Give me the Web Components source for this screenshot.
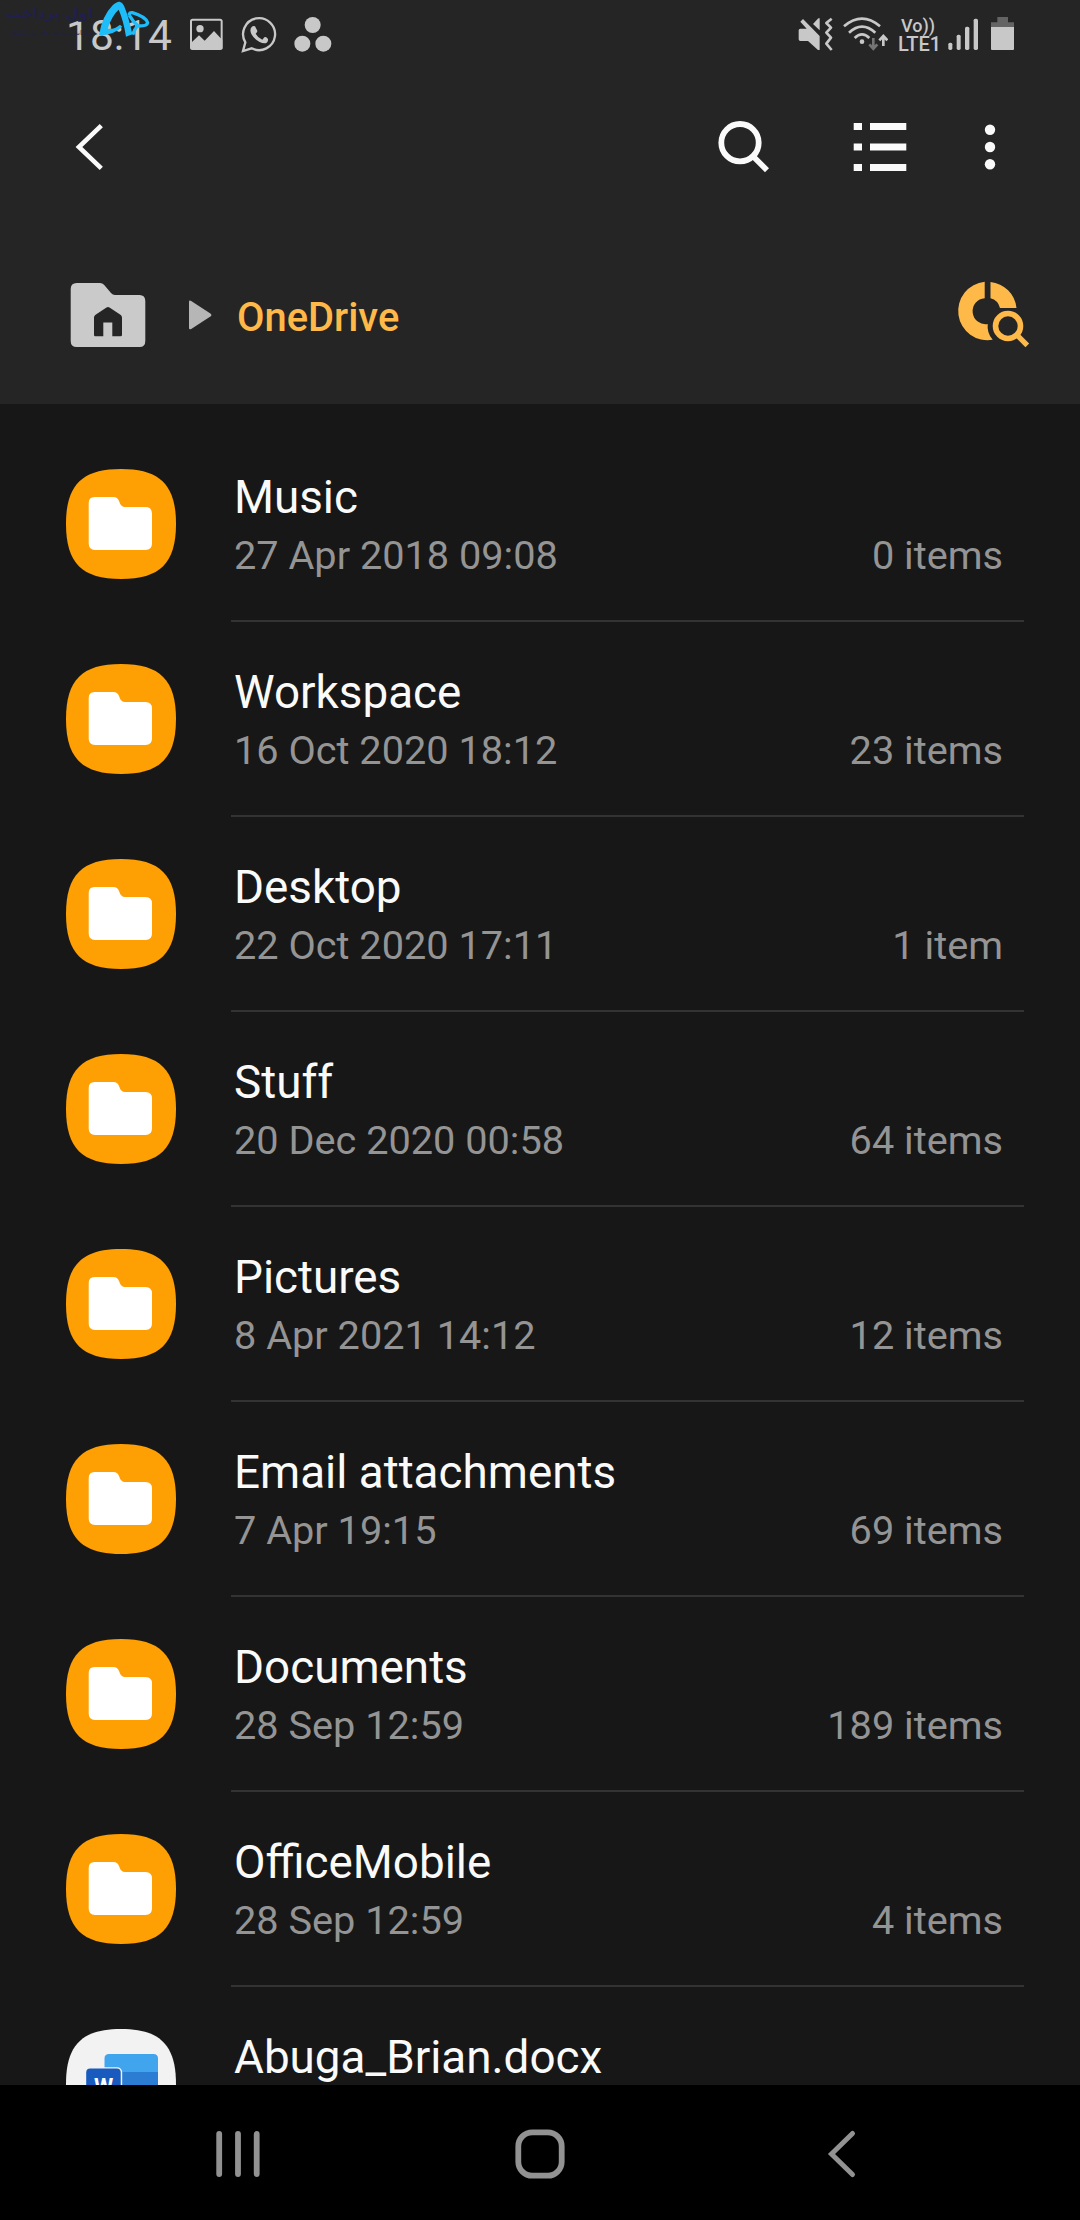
<!DOCTYPE html>
<html lang="en">
<head>
<meta charset="utf-8">
<title>My Files</title>
<style>
  html, body {
    margin: 0;
    height: 100%;
    background: #171717;
  }

  body {
    font-family: Roboto, "Noto Sans", sans-serif;
    color: #fafafa;
    overflow: hidden;
  }
</style>
</head>
<body>
<files-app>
  <status-bar slot="header" time="18:14"></status-bar>
  <tool-bar slot="header"></tool-bar>
  <path-bar slot="header">OneDrive</path-bar>
  <file-row count="0 items">Music<span slot="date">27 Apr 2018 09:08</span></file-row>
  <file-row count="23 items">Workspace<span slot="date">16 Oct 2020 18:12</span></file-row>
  <file-row count="1 item">Desktop<span slot="date">22 Oct 2020 17:11</span></file-row>
  <file-row count="64 items">Stuff<span slot="date">20 Dec 2020 00:58</span></file-row>
  <file-row count="12 items">Pictures<span slot="date">8 Apr 2021 14:12</span></file-row>
  <file-row count="69 items">Email attachments<span slot="date">7 Apr 19:15</span></file-row>
  <file-row count="189 items">Documents<span slot="date">28 Sep 12:59</span></file-row>
  <file-row count="4 items">OfficeMobile<span slot="date">28 Sep 12:59</span></file-row>
  <file-row type="word">Abuga_Brian.docx</file-row>
  <nav-keys slot="footer"></nav-keys>
</files-app>

<script>
const define = (name, html, setup) => {
  const template = document.createElement('template');
  template.innerHTML = html;
  customElements.define(name, class extends HTMLElement {
    constructor() {
      super();
      this.attachShadow({ mode: 'open' }).appendChild(template.content.cloneNode(true));
    }

    connectedCallback() {
      if (setup) {
        setup(this, this.shadowRoot);
      }
    }
  });
};

define('files-app', `
  <style>
    :host {
      display: flex;
      flex-direction: column;
      position: relative;
      width: 1080px;
      height: 2220px;
      overflow: hidden;
      background: #171717;
    }

    header {
      flex: none;
      height: 404px;
      background: #252525;
    }

    main {
      flex: 1;
      min-height: 0;
      overflow: hidden;
      padding-top: 23px;
    }

    brand-mark {
      position: absolute;
      top: 0;
      left: 0;
    }
  </style>
  <header><slot name="header"></slot></header>
  <main><slot></slot></main>
  <slot name="footer"></slot>
  <brand-mark></brand-mark>
`);

define('brand-mark', `
  <style>
    :host {
      display: block;
      width: 152px;
      height: 40px;
      font-family: "DejaVu Sans", sans-serif;
      color: #211f4c;
    }

    .text {
      width: 91px;
      padding-left: 2px;
      direction: rtl;
      white-space: nowrap;
    }

    .name {
      font-size: 15px;
      font-weight: 700;
      line-height: 26px;
      height: 29px;
    }

    .sub {
      font-size: 6.6px;
      line-height: 9px;
      color: #232140;
    }

    svg {
      position: absolute;
      left: 97px;
      top: 0;
    }
  </style>
  <div class="text">
    <div class="name">اول پرداخت</div>
    <div class="sub">سامانه پرداخت های بین المللی</div>
  </div>
  <svg width="55" height="40" viewBox="291 0 165 120" fill="none" stroke="#1fbcfa">
    <path fill="#1fbcfa" stroke="none" d="M297 106Q306 48 338 16Q350 4 359 5Q367 7 372 17Q386 50 397 103L378 110Q370 60 356 29Q336 46 323 86Q342 89 360 74L367 80Q345 104 297 106Z"/>
    <path stroke-width="10" d="M387 47Q388 36 397 38Q437 50 443 68Q442 79 412 78Q404 87 398 104M388 46Q400 66 412 76"/>
  </svg>
`);

// Status icons are drawn on a 3x grid, 210 units being the 70px bar
define('status-bar', `
  <style>
    :host {
      display: flex;
      align-items: flex-start;
      height: 70px;
      color: #c8c8c8;
    }

    svg {
      flex: none;
      height: 70px;
      fill: currentColor;
    }

    .time {
      width: 124px;
      padding-left: 66px;
      font-size: 42.5px;
      line-height: 50px;
      padding-top: 11px;
    }

    .left, .right {
      display: flex;
    }

    .left { gap: 16px; }
    .right { margin-left: auto; padding-right: 65px; gap: 9px; }

    .lte {
      width: 42px;
      padding: 17px 0 0 1px;
      box-sizing: border-box;
      font-weight: 500;
      white-space: nowrap;
    }

    .lte div { line-height: 18px; height: 18px; }
    .vo { font-size: 18px; padding-left: 3px; }
    .net { font-size: 20px; }
  </style>
  <div class="time"></div>
  <div class="left">
    <svg width="35" viewBox="570 0 105 210">
      <rect x="573" y="59" width="92" height="88" rx="5" fill="none" stroke="currentColor" stroke-width="6"/>
      <circle cx="600" cy="86" r="11"/>
      <path d="M572 130L597 106L614 122L642 93L667 120V148H572Z"/>
    </svg>
    <svg width="37" viewBox="723 0 111 210">
      <path fill="none" stroke="currentColor" stroke-width="7" d="M729 153L736 127A48 48 0 1 1 755 145Z"/>
      <path d="M755 81Q760 76 765 79L772 92Q773 96 767 101Q774 114 787 119L793 112Q796 110 799 112L804 117Q805 124 800 128Q792 132 779 126Q762 117 754 102Q748 89 755 81Z"/>
    </svg>
    <svg width="38" viewBox="880 0 114 210">
      <circle cx="936" cy="75" r="24"/>
      <circle cx="905" cy="131" r="24"/>
      <circle cx="968" cy="131" r="24"/>
    </svg>
  </div>
  <div class="right">
    <svg width="36" viewBox="48 0 108 210">
      <path d="M50 91Q50 86 55 86H74L55 65L63 57L113 108V150H108L78 123H55Q50 123 50 118Z"/>
      <path d="M93 72L109 55H113V91Z"/>
      <path fill="none" stroke="currentColor" stroke-width="8" stroke-linejoin="round" d="M149 56L133 69L147 83L133 98L147 113L133 131L149 150"/>
    </svg>
    <svg width="45" viewBox="189 0 135 210">
      <g fill="none" stroke="currentColor" stroke-width="8">
        <path d="M192 79Q246 33 300 79"/>
        <path d="M207 98Q246 62 286 98"/>
        <path d="M224 114Q246 92 268 114"/>
        <path stroke="#757575" d="M280 114V144M268 133L280 146L292 133"/>
        <path d="M310 138V110M298 121L310 108L322 121"/>
      </g>
      <circle cx="246" cy="125" r="7"/>
    </svg>
    <div class="lte">
      <div class="vo">Vo))</div>
      <div class="net">LTE1</div>
    </div>
    <svg width="31" viewBox="501 0 93 210">
      <rect x="502" y="128" width="12" height="22" rx="5"/>
      <rect x="527" y="104" width="12" height="46" rx="5"/>
      <rect x="552" y="80" width="13" height="70" rx="5"/>
      <rect x="578" y="56" width="13" height="94" rx="5"/>
    </svg>
    <svg width="27" viewBox="624 0 81 210">
      <path fill="#646464" d="M633 67H652V52Q652 51 653 51H683Q684 51 684 52V67H702V81H633Z"/>
      <path d="M633 81H702V147Q702 150 699 150H636Q633 150 633 147Z"/>
    </svg>
  </div>
`, (host, root) => {
  root.querySelector('.time').textContent = host.getAttribute('time');
});

define('tool-bar', `
  <style>
    :host {
      display: flex;
      align-items: center;
      height: 154px;
      padding: 0 84px 0 68px;
      color: #fafafa;
    }

    .actions {
      display: flex;
      gap: 79px;
      margin-left: auto;
    }

    .more { margin-left: -3px; }

    svg { display: block; fill: currentColor; overflow: visible; }
    .line { fill: none; stroke: currentColor; }
  </style>
  <svg width="44" height="50" viewBox="68 122 44 50">
    <path class="line" stroke-width="4.6" d="M101.3 125.6L78.9 147L101.3 168.4"/>
  </svg>
  <div class="actions">
    <svg width="56" height="50" viewBox="717 122 56 50">
      <circle class="line" stroke-width="5.8" cx="740" cy="142.7" r="18.7"/>
      <path class="line" stroke-width="5.6" d="M753 156.2L767 170.2"/>
    </svg>
    <svg width="56" height="50" viewBox="852 122 56 50">
      <path d="M853.7 123h8.3v7h-8.3zM870 123h36.3v7H870zM853.7 143.5h8.3v7h-8.3zM870 143.5h36.3v7H870zM853.7 164h8.3v7h-8.3zM870 164h36.3v7H870z"/>
    </svg>
    <svg class="more" width="12" height="50" viewBox="984 122 12 50">
      <circle cx="990" cy="129.8" r="5.2"/>
      <circle cx="990" cy="147" r="5.2"/>
      <circle cx="990" cy="164.2" r="5.2"/>
    </svg>
  </div>
`);

define('path-bar', `
  <style>
    :host {
      display: flex;
      align-items: center;
      height: 180px;
      padding: 0 50px 0 68px;
      color: #feb948;
      font-size: 39.9px;
      font-weight: 500;
    }

    svg { display: block; flex: none; }
    .home { margin-right: 36px; }
    .arrow { margin-right: 19px; }
    .usage { margin-left: auto; }
    .name { padding-top: 6px; }
  </style>
  <svg class="home" width="80" height="70" viewBox="68 279 80 70" fill="#cacaca">
    <path fill-rule="evenodd" d="M76.7 283H100Q102.5 283 104 284.7L111 293Q112.7 295 115 295H139.5Q145.3 295 145.3 301V341Q145.3 347 139.5 347H76.7Q70.7 347 70.7 341V289Q70.7 283 76.7 283ZM94 317.5V335Q94 336.3 95.3 336.3H103.3V322.5H112.3V336.3H120.5Q122 336.3 122 335V317.5Q122 316 120.8 315L109.5 307.4Q108 306.4 106.5 307.4L95.2 315Q94 316 94 317.5Z"/>
  </svg>
  <svg class="arrow" width="34" height="70" viewBox="184 279 34 70" fill="#b6b6b6">
    <path d="M189 302Q189 299.8 191.2 301.1L210.4 313.4Q212.3 315 210.4 316.6L191.2 329Q189 330 189 328Z"/>
  </svg>
  <span class="name"><slot></slot></span>
  <svg class="usage" width="76" height="70" viewBox="954 279 76 70" fill="#feb948">
    <path d="M984.7 281.8A29.3 29.3 0 1 0 992.7 339.8A20.5 20.5 0 0 1 987.7 324A13 13 0 1 1 984.7 298.2Z"/>
    <path d="M990.5 281.9A29.3 29.3 0 0 1 1016.5 308H1000A13.3 13.3 0 0 0 990.5 298.3Z"/>
    <circle cx="1008" cy="326" r="12.5" fill="none" stroke="#feb948" stroke-width="5.6"/>
    <path fill="none" stroke="#feb948" stroke-width="5.2" d="M1016.5 334.5L1027.3 345.3"/>
  </svg>
`);

define('file-row', `
  <style>
    :host {
      display: grid;
      grid-template-columns: 165px 793px;
      height: 195px;
      padding-left: 66px;
    }

    .icon {
      padding-top: 42px;
    }

    svg { display: block; }

    .body {
      box-sizing: border-box;
      height: 195px;
      padding: 44px 21px 0 3px;
      border-bottom: 2px solid #333;
    }

    .name {
      font-size: 45.8px;
      line-height: 54px;
      white-space: nowrap;
    }

    .meta {
      display: flex;
      justify-content: space-between;
      margin-top: 8px;
      font-size: 39.7px;
      line-height: 46px;
      color: #949494;
    }

    .word { display: none; }
    :host([type="word"]) .word { display: block; }
    :host([type="word"]) .folder { display: none; }
  </style>
  <div class="icon">
    <svg class="folder" width="110" height="110" viewBox="0 0 110 110">
      <path fill="#fe9f04" d="M55 0C94 0 110 16 110 55S94 110 55 110S0 94 0 55S16 0 55 0Z"/>
      <path fill="#fff" d="M28.5 28H47.5Q51.5 28 53 32Q54.8 38 59 38H79.5Q86 38 86 44.5V74.500Q86 81 79.5 81H29Q22.7 81 22.7 74.500V34Q22.7 28 28.5 28Z"/>
    </svg>
    <svg class="word" width="110" height="110" viewBox="0 0 110 110">
      <path fill="#f2f2f2" d="M55 0C94 0 110 16 110 55S94 110 55 110S0 94 0 55S16 0 55 0Z"/>
      <path fill="#41a5ee" d="M43 25H87.5Q92 25 92 29.5V43H38.5V29.5Q38.5 25 43 25Z"/>
      <path fill="#2b7cd3" d="M38.5 43H92V62H38.5Z"/>
      <path fill="#185abd" d="M38.5 62H92V80Q92 84 88 84H38.5Z"/>
      <rect x="19.2" y="38.2" width="37" height="37" rx="5" fill="#f2f2f2"/>
      <rect x="20.2" y="39.5" width="34.5" height="34.5" rx="4" fill="#185abd"/>
      <text x="37.5" y="65" fill="#fff" font-size="22" font-weight="700" text-anchor="middle">W</text>
    </svg>
  </div>
  <div class="body">
    <div class="name"><slot></slot></div>
    <div class="meta"><slot name="date"></slot><span class="count"></span></div>
  </div>
`, (host, root) => {
  root.querySelector('.count').textContent = host.getAttribute('count') || '';
});

define('nav-keys', `
  <style>
    :host {
      display: flex;
      flex: none;
      justify-content: space-between;
      align-items: center;
      box-sizing: border-box;
      height: 135px;
      padding: 3px 212px 0;
      background: #000;
    }

    svg {
      display: block;
      fill: none;
      stroke: #929292;
      stroke-width: 5.8;
      stroke-linecap: round;
    }
  </style>
  <svg width="52" height="52" viewBox="0 0 52 52"><path d="M7.2 6V46M26 6V46M44.7 6V46"/></svg>
  <svg width="52" height="52" viewBox="0 0 52 52"><rect x="4.3" y="4.3" width="43.4" height="43.4" rx="14"/></svg>
  <svg width="52" height="52" viewBox="0 0 52 52"><path stroke-width="5" d="M36.5 5.5L15.5 26L36.5 46.5"/></svg>
`);
</script>
</body>
</html>
